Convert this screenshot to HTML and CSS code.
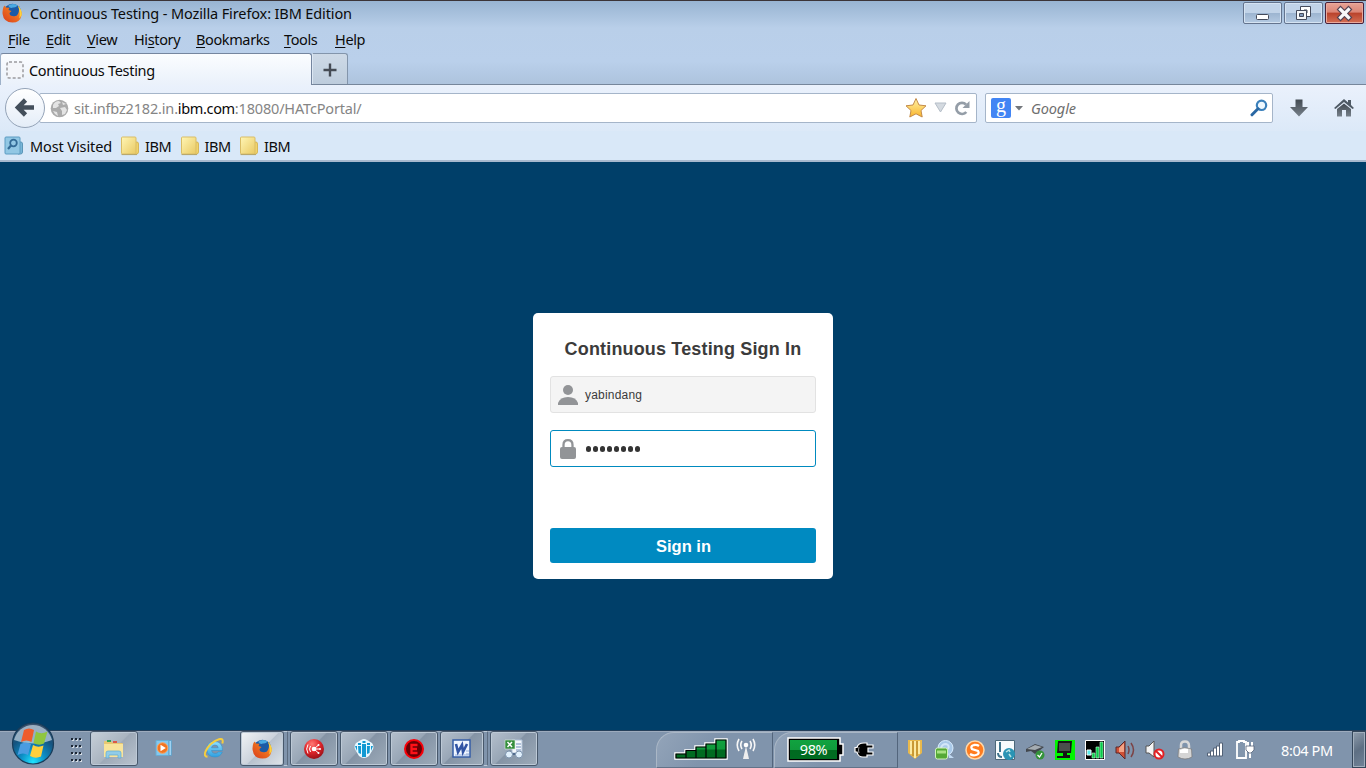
FILE: index.html
```html
<!DOCTYPE html>
<html lang="en">
<head>
<meta charset="utf-8">
<title>Continuous Testing</title>
<link rel="stylesheet" href="styles.css">
</head>
<body>
<svg class="defs" width="0" height="0">
  <defs>
    <linearGradient id="fold" x1="0" y1="0" x2="1" y2="1"><stop offset="0" stop-color="#fff6b5"/><stop offset="1" stop-color="#e9c963"/></linearGradient>
    <linearGradient id="steel" x1="0" y1="0" x2="0" y2="1"><stop offset="0" stop-color="#424a52"/><stop offset="1" stop-color="#77818b"/></linearGradient>
    <linearGradient id="green" x1="0" y1="0" x2="0" y2="1"><stop offset="0" stop-color="#11a340"/><stop offset=".5" stop-color="#109a3c"/><stop offset=".55" stop-color="#006a20"/><stop offset="1" stop-color="#006c22"/></linearGradient>
    <linearGradient id="flame" x1="0" y1="1" x2="1" y2="0"><stop offset="0" stop-color="#d93c1c"/><stop offset=".6" stop-color="#ef7420"/><stop offset="1" stop-color="#ffd33b"/></linearGradient>
    <linearGradient id="star" x1="0" y1="0" x2="0" y2="1"><stop offset="0" stop-color="#fff3a5"/><stop offset="1" stop-color="#f9b52d"/></linearGradient>
    <linearGradient id="sky" x1="0" y1="0" x2="0" y2="1"><stop offset="0" stop-color="#8fe0ff"/><stop offset="1" stop-color="#2f9fe0"/></linearGradient>
    <radialGradient id="orb" cx=".5" cy=".95" r=".9"><stop offset="0" stop-color="#20e4ff"/><stop offset=".35" stop-color="#0c8cc4"/><stop offset=".7" stop-color="#155480"/><stop offset="1" stop-color="#36516d"/></radialGradient>
    <radialGradient id="redball" cx=".4" cy=".25" r=".8"><stop offset="0" stop-color="#ff7a75"/><stop offset=".5" stop-color="#e1262c"/><stop offset="1" stop-color="#920d14"/></radialGradient>
    <symbol id="fox" viewBox="0 0 20 20">
      <circle cx="10.500" cy="9.500" r="8.800" fill="#1b5aa6"/>
      <path d="M6 2.800Q10.500-.500 15.500 2.500Q14 5 11 4.500Q8.500 6 6 2.800Z" fill="#49a9e2"/>
      <path d="M1.500 4L2.500 2.500L4 4.500L7.500 4.800L6.500 7L9.500 8L7.500 10Q7.500 13 10.500 13Q14.500 14 16 11Q18 7 16 2.800Q20.500 8 19.500 12.500Q18 19.600 10.500 19.600Q1.500 19.200.6 11Q.2 7 1.500 4Z" fill="url(#flame)"/>
      <path d="M16 2.800Q20.300 7 19.500 12.500L17 15.500Q19 9 16 2.800Z" fill="#ffd23a"/>
    </symbol>
    <symbol id="folder" viewBox="0 0 19 20">
      <path d="M15 6h2q1.500 0 1.500 2v8q0 2-2 2H14z" fill="#f1d36a" stroke="#d1ad45" stroke-width=".8"/>
      <rect x="1.500" y="1" width="14.500" height="17" rx="1" fill="url(#fold)" stroke="#d9bd66"/>
      <path d="M1.500 18.600H17" stroke="#b4a468" stroke-width="1"/>
    </symbol>
  </defs>
</svg>

<header class="chrome">
  <div class="titlebar">
    <svg class="fox" width="20" height="20"><use href="#fox"/></svg>
    <span class="win-title">Continuous Testing - Mozilla Firefox: IBM Edition</span>
    <div class="controls">
      <span class="ctl"><svg width="37" height="20"><rect x="12.500" y="11.500" width="12" height="5" rx="1" fill="#fff" stroke="#454b5b"/></svg></span>
      <span class="ctl"><svg width="37" height="20"><path d="M15.500 3.500h10v10h-10z" fill="#fff" stroke="#454b5b"/><path d="M19 7h3v3h-3z" fill="#93a9c7" stroke="#454b5b"/><path d="M11.500 7.500h10v9h-10z" fill="#f4f6f8" stroke="#454b5b"/><path d="M14.500 10.500h4v3h-4z" fill="#8099bb" stroke="#454b5b"/></svg></span>
      <span class="ctl close"><svg width="37" height="20"><path d="M14.500 6.500L22.500 14.500M22.500 6.500L14.500 14.500" stroke="#534252" stroke-width="5.500" stroke-linecap="square"/><path d="M14.500 6.500L22.500 14.500M22.500 6.500L14.500 14.500" stroke="#f8f8f8" stroke-width="3.200" stroke-linecap="square"/></svg></span>
    </div>
  </div>
  <nav class="menubar">
    <span><u>F</u>ile</span><span><u>E</u>dit</span><span><u>V</u>iew</span><span>Hi<u>s</u>tory</span><span><u>B</u>ookmarks</span><span><u>T</u>ools</span><span><u>H</u>elp</span>
  </nav>
  <div class="tabs">
    <div class="tab">
      <svg width="18" height="18"><rect x="1" y="1" width="16" height="16" rx="2" fill="#f4f6fa" stroke="#9a9a9e" stroke-width="1.500" stroke-dasharray="3 2"/></svg>
      <span class="tab-title">Continuous Testing</span>
    </div>
    <div class="newtab"><svg width="14" height="14"><path d="M7 .500v13M.500 7h13" stroke="#454b54" stroke-width="2.400"/></svg></div>
  </div>
  <div class="navbar">
    <div class="back"><svg width="22" height="22"><path d="M11.500 3L4 10.500L11.500 18M4.500 10.500H20" fill="none" stroke="#444f5b" stroke-width="4.600"/></svg></div>
    <div class="url">
      <svg class="globe" width="19" height="19"><circle cx="9.500" cy="9.500" r="8.800" fill="#ababab"/><path d="M3 6Q5 2 9 2L11 4L8 5L9 7L6 9L3 9ZM10 9L15 8L17 11L15 15L12 16L12 12ZM12 3L16 5L13 6ZM3 12L7 13L8 17L5 15Z" fill="#e4e4e4"/></svg>
      <span class="address">sit.infbz2182.in.<b>ibm.com</b>:18080/HATcPortal/</span>
      <svg class="star" width="22" height="22"><path d="M11 1.500L14 8L21 8.800L16 13.500L17.200 20L11 16.800L4.800 20L6 13.500L1 8.800L8 8Z" fill="url(#star)" stroke="#c48b49" stroke-linejoin="round"/></svg>
      <svg class="drop" width="14" height="12"><path d="M1 1h11L6.500 10Z" fill="#d4dae0" stroke="#b5bec8"/></svg>
      <svg class="reload" width="17" height="17"><path d="M12.300 12A5.600 5.600 0 1 1 12 4.500" fill="none" stroke="#949da7" stroke-width="2.700"/><path d="M15.500 1V8H8.500Z" fill="#949da7"/></svg>
    </div>
    <div class="search">
      <span class="g">g</span>
      <svg class="caret" width="8" height="5"><path d="M0 0h8L4 4.500Z" fill="#73777c"/></svg>
      <span class="hint">Google</span>
      <svg width="18" height="18"><circle cx="11.500" cy="6.300" r="4.700" fill="#eef8ff" stroke="#3b80bb" stroke-width="2.200"/><path d="M8 9.800L2 15.800" stroke="#2a68a4" stroke-width="3" stroke-linecap="round"/></svg>
    </div>
    <svg class="down" width="20" height="20"><path d="M6.500 1.500h7v7.500h5.500L10 18.500L1 9H6.500Z" fill="url(#steel)"/></svg>
    <svg class="home" width="20" height="20"><path d="M10 1L14 4.500V2h3v5L20 10l-1.500 1L10 4L1.500 11L0 10Z" fill="#4f5a65"/><path d="M3 11L10 5.500L17 11V18.500H12V12H8V18.500H3Z" fill="url(#steel)"/></svg>
  </div>
  <div class="bookmarks">
    <svg class="mv" width="19" height="20"><path d="M15 6h2q1.500 0 1.500 2v8q0 2-2 2H14z" fill="#79b6d8" stroke="#5c96b8"/><rect x="1" y="1" width="15" height="17" rx="1" fill="#91c7e4" stroke="#5d9cc2"/><circle cx="9.500" cy="7" r="3.300" fill="none" stroke="#336b96" stroke-width="1.800"/><path d="M7 9.500L4 13" stroke="#336b96" stroke-width="2.200"/></svg>
    <span class="most">Most Visited</span>
    <svg class="folder" width="19" height="20"><use href="#folder"/></svg><span class="bm">IBM</span>
    <svg class="folder" width="19" height="20"><use href="#folder"/></svg><span class="bm">IBM</span>
    <svg class="folder" width="19" height="20"><use href="#folder"/></svg><span class="bm">IBM</span>
  </div>
</header>

<main class="page">
  <form class="card">
    <h1>Continuous Testing Sign In</h1>
    <div class="field user">
      <svg width="20" height="20"><circle cx="10" cy="5" r="5" fill="#929497"/><path d="M0 20V18Q2 12 10 12Q18 12 20 18V20Z" fill="#929497"/></svg>
      <span>yabindang</span>
    </div>
    <div class="field pass">
      <svg width="20" height="20"><path d="M5.500 10V6Q5.500 1.200 10 1.200Q14.500 1.200 14.500 6V10" fill="none" stroke="#929497" stroke-width="2.300"/><rect x="2" y="8" width="16" height="12" rx="2" fill="#929497"/></svg>
      <span class="dots"><i></i><i></i><i></i><i></i><i></i><i></i><i></i><i></i></span>
    </div>
    <div class="submit">Sign in</div>
  </form>
</main>

<footer class="taskbar">
  <svg class="orb" width="46" height="44" viewBox="0 0 46 44">
    <circle cx="23" cy="21.500" r="20.500" fill="url(#orb)" stroke="#193c59" stroke-width="1.200"/>
    <path d="M4 18A19.500 19.500 0 0 1 42 18Q24 25 4 18Z" fill="#d5e2ec" opacity=".65"/>
    <path d="M14 8Q19 5 24 8L21.500 20Q16.500 17 11 20Z" fill="#ee5c2c"/><path d="M26 9.500Q31 13 37.500 9.500L34 21.500Q29 24 23.500 21Z" fill="#8fc63e"/><path d="M10.500 22Q16 19 21 22L18 33Q13 30 7.500 33Z" fill="#4a9ce1"/><path d="M23 23Q28 26 33.500 23.500L31 34.500Q25.500 37 20 34Z" fill="#ffcf3c"/>
  </svg>
  <svg class="grip" width="12" height="26"><path d="M2 3h10M2 10h10M2 17h10M2 24h10" stroke="#d3dbe4" stroke-width="2" stroke-dasharray="2 2"/><path d="M1 2h10M1 9h10M1 16h10M1 23h10" stroke="#1d2836" stroke-width="2" stroke-dasharray="2 2"/></svg>
  <div class="tb w48 lit"><svg width="20" height="20"><path d="M0 3Q0 2 1 2H7L9 4H18Q19 4 19 5V18H0Z" fill="#e8c873"/><path d="M3 1h4v2H3z" fill="#31a359"/><path d="M9 2h4v2H9z" fill="#dc5945"/><path d="M0 5H19V18H0Z" fill="#f8e49b"/><path d="M2 19V14Q2 12 4 12H15Q17 12 17 14V19H14V16H5V19Z" fill="#91cce8" stroke="#5ea9d0" stroke-width=".700"/></svg></div>
  <svg class="wmp" width="18" height="18"><path d="M1 1.500H14V16.500H1Z" fill="#84c8ee" stroke="#68acd3"/><path d="M14 1.500h2.500v15H14z" fill="#9fd3f2" stroke="#5a9dc6" stroke-width=".800"/><circle cx="7.500" cy="9" r="5.300" fill="#f27420" stroke="#f9a765"/><path d="M5.500 5.800L10.800 9L5.500 12.200Z" fill="#fff"/></svg>
  <svg class="ie" width="20" height="20"><path d="M10.500 3.500Q18.500 3.500 18.500 12.500H7.500Q8 15.500 11 15.500Q13.500 15.500 14.300 14H18.300Q16.500 19 11 19Q3 19 3 11.300Q3 3.500 10.500 3.500ZM7.500 9.800H14.200Q14 7 11 7Q8 7 7.500 9.800Z" fill="url(#sky)" fill-rule="evenodd" stroke="#2f8fc8" stroke-width=".500"/><path d="M3.500 18.800Q-.500 18.500 1.500 13.500Q6 4 15 1.200Q20 0 18.300 5.500" fill="none" stroke="#f5ce3e" stroke-width="2"/></svg>
  <div class="tb w44 active"><svg width="20" height="20"><use href="#fox"/></svg></div><i class="stack"></i>
  <div class="tb w48 b2"><svg width="22" height="22"><circle cx="11" cy="11" r="10" fill="url(#redball)"/><circle cx="11" cy="11" r="2.300" fill="#fff"/><path d="M11 11L15.500 7M11 11H17M11 11L15.500 15M7.500 8Q5.500 11 7.500 14M5 6.500Q2.300 11 5 15.500" stroke="#fff" fill="none" stroke-width="1"/><circle cx="15.500" cy="7" r="1" fill="#fff"/><circle cx="17" cy="11" r="1" fill="#fff"/><circle cx="15.500" cy="15" r="1" fill="#fff"/></svg></div>
  <div class="tb w48 b2"><svg width="20" height="20"><path d="M7 1Q10-1 13 1L18 4Q21 8 18 12L15 17Q10 21 5 17L2 12Q-1 8 2 4Z" fill="#e7f8ff"/><path d="M8.500 2h3v2h-3zM8 5h4V18H8zM4 4h3v2H4zM13 4h3v2h-3zM4 7H7V15L4.500 14zM13 7h3L15.500 14L13 15zM1 7h2v5zM17 7H19l-2 5z" fill="#1199d2"/></svg></div>
  <div class="tb w48 b2"><svg width="20" height="20"><circle cx="10" cy="10" r="9" fill="#690005" stroke="#f70009" stroke-width="2"/><path d="M13.500 6H7.500v8h6M7.500 10h5.500" stroke="#ff1118" stroke-width="2.300" fill="none"/></svg></div>
  <div class="tb w44 b2"><svg width="20" height="20"><path d="M1 1H18V18H1Z" fill="#eff5ff" stroke="#365da6" stroke-width="1.500"/><path d="M14 15h3M14 12h3M3 16h14" stroke="#93add9"/><path d="M4 5L6 13L10 6L11 13L15 5" fill="none" stroke="#3154a4" stroke-width="2.600"/></svg></div><i class="stack"></i>
  <div class="tb w48 b2"><svg width="20" height="20"><path d="M8 1H18V14H8Z" fill="#f4f7fb" stroke="#afc1d8"/><path d="M12 5h5M12 8h5M12 11h5" stroke="#718fbb"/><path d="M1 1H11V10H1Z" fill="#358e3c" stroke="#dcefdc" stroke-width=".600"/><path d="M3.500 3L8 8M8 3L3.500 8" stroke="#fff" stroke-width="1.500"/><path d="M8 15h4" stroke="#526c8e" stroke-width="2"/><circle cx="5" cy="15.500" r="3.500" fill="#e0effc" stroke="#7c92ac"/><circle cx="15" cy="15.500" r="3.500" fill="#e0effc" stroke="#7c92ac"/></svg></div>

  <div class="panel signal">
    <svg width="54" height="22"><path d="M1 21V15H11V12H21V8H31V5H41V1H53V21Z" fill="url(#green)" stroke="#fff" stroke-width="1.500"/><path d="M2 20V16H12V12.500H22V9H32V6H42V2H52V20ZM12 16V20M22 12V20M32 9V20M42 6V20" fill="none" stroke="#000" stroke-width="1.200"/></svg>
    <svg width="20" height="22"><path d="M10 8L7 21H13Z" fill="#eee"/><circle cx="10" cy="7" r="2.300" fill="#fff"/><path d="M6 3Q3.500 7 6 11M3 1Q-.500 7 3 13M14 3Q16.500 7 14 11M17 1Q20.500 7 17 13" fill="none" stroke="#f7f7f7" stroke-width="1.600"/></svg>
  </div>
  <div class="panel battery">
    <div class="batt"><svg width="57" height="26"><path d="M1 1H53V7H56V18H53V24H1Z" fill="#000" stroke="#fff" stroke-width="1.500"/><path d="M3 3H50V22H3Z" fill="url(#green)"/></svg><span>98%</span></div>
    <svg width="20" height="16"><path d="M1 5.500H3Q4 1 10 1H13V3H19V6H14V10H19V13H13V15H9Q4 15 3 10H1Z" fill="#000" stroke="#fff" stroke-width="1.200"/><path d="M5 5Q4 8 5 11" stroke="#999" fill="none"/></svg>
  </div>
  <div class="tray">
    <svg width="20" height="22"><path d="M3 1H17V14L10 20L3 14Z" fill="#e9b94c"/><path d="M6 2V15M10 2V19M14 2V15" stroke="#fff1b0" stroke-width="1.700"/><path d="M8 2V17M12 2V17" stroke="#a8781e"/></svg>
    <svg width="20" height="20"><circle cx="10.500" cy="8" r="7.500" fill="#a9c9e9" stroke="#d9edff"/><path d="M13 13L19 18H14Z" fill="#c1daf3"/><path d="M6 8Q7 4 11 4Q15 5 13 9" fill="none" stroke="#d3e6f8" stroke-width="2"/><rect x=".500" y="8" width="12" height="11" rx="2" fill="#55a936" stroke="#d2f2bd"/><path d="M2 12h9" stroke="#a9e184" stroke-width="3"/></svg>
    <svg width="20" height="20"><circle cx="10" cy="10" r="9" fill="#ff7c1f" stroke="#ffd7a7" stroke-width="1.500"/><path d="M14 6Q12 4.500 9 5Q5 6 7 9L13 11Q15 14 11 15Q8 16 5 14" fill="none" stroke="#fff" stroke-width="2.300"/></svg>
    <svg width="20" height="20"><path d="M.500.500H19.500V19.500H.500Z" fill="#f7fbfc" stroke="#4c6879"/><path d="M5 2V12M3 13Q3 17 7 17" stroke="#3f758d" stroke-width="2" fill="none"/><circle cx="14" cy="14" r="6" fill="#2994b4"/><path d="M11 12L14 10L15 12M14 14L16 17" stroke="#b8e4e4" stroke-width="1.500" fill="none"/></svg>
    <svg width="20" height="20"><path d="M1 9L10 4L19 7L10 14L6 11L1 12Z" fill="#42474d"/><path d="M2 9L10 5L17 7L10 10Z" fill="#a4abb1"/><circle cx="15" cy="15" r="4.500" fill="#33943a"/><path d="M12.500 15L14.500 17L17 13" stroke="#fff" fill="none" stroke-width="1.300"/></svg>
    <svg width="20" height="20"><path d="M0 0H20V20H0Z" fill="#00f600"/><path d="M3 1H17L16 13H2Z" fill="#161616"/><path d="M4 3H15V11H4Z" fill="#4a4f4b"/><path d="M8 13H12V15H15V18H2V16H8Z" fill="#141414"/></svg>
    <svg width="20" height="20"><path d="M.500.500H19.500V19.500H.500Z" fill="#000" stroke="#fff"/><path d="M2 10H6V15H2Z" fill="#58eeee" stroke="#fff"/><path d="M7 18V13H10V18ZM11 18V7H14V18ZM15 18V2H18V18Z" fill="#08c948" stroke="#c8ffda" stroke-width=".600"/></svg>
    <svg width="20" height="20"><path d="M1 7H4L10 1V19L4 13H1Z" fill="#cf5036" stroke="#59282b"/><path d="M4 8L9 3V12H4" fill="#f4a385"/><path d="M13 6Q15 10 13 14M16 3Q21 10 16 17" fill="none" stroke="#7c4345" stroke-width="1.500"/></svg>
    <svg width="20" height="20"><path d="M1 6H4L9 1V17L4 13H1Z" fill="#f4f4f4" stroke="#555"/><circle cx="14" cy="14" r="4.500" fill="#fff" stroke="#e12024" stroke-width="2"/><path d="M11 11L17 17" stroke="#e12024" stroke-width="2"/></svg>
    <svg width="20" height="20"><path d="M6 10V5Q6 1.500 10 1.500Q14 1.500 14 6V10" fill="none" stroke="#d9d9d9" stroke-width="2.500"/><path d="M3.500 9Q9 6 16.500 9L17 17Q10 21 3 17Z" fill="#d5d5d5" stroke="#777" stroke-width=".700"/><path d="M5 10Q9 8 13 9V13H5Z" fill="#fff"/></svg>
    <svg width="20" height="20"><path d="M2.500 13H5.500V16H2.500ZM5.500 11H8.500V16H5.500ZM8.500 8H11.500V16H8.500ZM11.500 6H14.500V16H11.500ZM14.500 3H17.500V16H14.500Z" fill="#fff" stroke="#526176" stroke-width="1"/></svg>
    <svg width="20" height="20"><path d="M2 2H4V1H9V2H11V18H2Z" fill="#8296ad" stroke="#fff" stroke-width="1.800"/><path d="M13 2V7M17 2V7M15 12V18" stroke="#fff" stroke-width="2"/><path d="M11 6H19V10L16 13H14L11 10Z" fill="#fff" stroke="#536176" stroke-width=".800"/></svg>
  </div>
  <span class="clock">8:04 PM</span>
  <div class="desktop"></div>
</footer>
</body>
</html>
```
FILE: styles.css
```css
* { box-sizing: border-box; }
body { margin: 0; width: 1366px; height: 768px; overflow: hidden; display: flex; flex-direction: column; background: #003f69; font-family: "Noto Sans", "Open Sans", sans-serif; font-size: 14.5px; color: #0b0b0b; }
svg { display: block; flex: none; }
.defs { position: absolute; }
.chrome { height: 162px; flex: none; background: linear-gradient(#98b4d2 0, #b9cfe9 27px, #bad0eb 60px, #adc3dd 84px); border-top: 1px solid #3b3438; display: flex; flex-direction: column; }
.titlebar { height: 26px; display: flex; padding-left: 2px; }
.fox { margin-top: 2px; }
.win-title { margin-left: 8px; line-height: 25px; white-space: nowrap; letter-spacing: -.12px; }
.controls { margin-left: auto; margin-right: 2px; display: flex; gap: 2px; padding-top: 1px; height: 23px; }
.ctl { width: 39px; height: 22px; border: 1px solid #64748e; border-radius: 2px; background: linear-gradient(#c1d3e8 0 48%, #9cb4d0 50%, #b4cae2); box-shadow: inset 0 0 0 1px #d5e3f2; }
.close { border-color: #492039; background: linear-gradient(#e7a396, #dc8575 46%, #b9422b 50%, #d46f54); box-shadow: inset 0 0 0 1px #eaa99b; }
.menubar { height: 26px; display: grid; grid-template-columns: 38px 41px 47px 62px 88px 51px 60px; padding-left: 8px; line-height: 24px; letter-spacing: -.38px; }
.menubar u { text-underline-offset: 2px; text-decoration-thickness: 1px; }
.tabs { height: 32px; display: flex; border-bottom: 1px solid #76869b; }
.tab { width: 312px; height: 32px; display: flex; align-items: center; padding: 1px 0 0 5px; border: 1px solid #75869f; border-left-color: #9eb1c9; border-bottom: 0; border-radius: 3px 3px 0 0; background: linear-gradient(#fbfdff, #eaf1fb); }
.tab-title { margin-left: 5px; letter-spacing: -.3px; line-height: 20px; }
.newtab { width: 36px; height: 31px; padding-top: 1px; border: 1px solid #8395ab; border-left-color: #dce7f3; border-bottom: 0; border-radius: 0 3px 0 0; background: linear-gradient(#cedae7, #bdccdc); display: flex; align-items: center; justify-content: center; }
.navbar { height: 46px; background: linear-gradient(#eaf1fc, #dce9f8); display: flex; align-items: center; padding-left: 5px; }
.back { width: 40px; height: 40px; border: 1px solid #94a3b7; border-radius: 50%; background: linear-gradient(#fff, #e4edf8); display: flex; align-items: center; justify-content: center; z-index: 1; }
.url { width: 938px; height: 30px; margin-left: -6px; border: 1px solid #a5b5c9; border-radius: 2px; background: #fff; display: flex; align-items: center; padding-left: 10px; }
.address { margin-left: 5px; color: #858585; white-space: nowrap; letter-spacing: -.17px; }
.address b { font-weight: 400; color: #080808; letter-spacing: -.35px; }
.star { margin-left: auto; }
.drop { margin-left: 7px; }
.reload { margin: 0 5px 0 6px; }
.search { width: 288px; height: 30px; margin-left: 8px; border: 1px solid #a5b5c9; border-radius: 2px; background: #fff; display: flex; align-items: center; padding: 0 4px 0 5px; }
.g { width: 20px; height: 20px; border-radius: 2px; background: #4285f4; color: #fff; text-align: center; font: 20px/15px "Liberation Serif", serif; }
.caret { margin-left: 4px; }
.hint { margin: 0 auto 0 8px; font-style: italic; color: #6e6e6e; letter-spacing: -.1px; }
.down { margin-left: 16px; }
.home { margin-left: 25px; }
.bookmarks { height: 31px; background: #d9e8f8; border-bottom: 2px solid #a7b9ce; display: flex; align-items: center; padding-left: 4px; }
.bookmarks span { padding-top: 1px; }
.most { width: 90px; margin-left: 7px; letter-spacing: -.1px; white-space: nowrap; }
.bm { width: 34.500px; margin-left: 6px; letter-spacing: -.4px; }
.page { flex: 1; display: flex; justify-content: center; align-items: flex-start; padding-top: 151px; background: #003f69; }
.card { width: 300px; height: 266px; padding: 24px 17px 16px; border-radius: 5px; background: #fff; font-family: "Liberation Sans", Arial, sans-serif; color: #3b3b3b; }
h1 { height: 24px; margin: 0 0 15px; font-size: 18px; line-height: 24px; text-align: center; white-space: nowrap; letter-spacing: .16px; }
.field { height: 37px; border: 1px solid #e2e2e2; border-radius: 3px; padding-left: 7px; display: flex; align-items: center; gap: 7px; background: #f4f4f4; font-size: 12px; letter-spacing: .2px; }
.pass { margin-top: 17px; border-color: #008abf; background: #fff; }
.dots { display: flex; gap: 1.500px; padding: 1px 0 0 .500px; }
.dots i { width: 5.500px; height: 5.500px; border-radius: 50%; background: #343434; }
.submit { margin-top: 61px; height: 35px; border-radius: 3px; background: #008ac1; color: #fff; text-align: center; font-size: 16.500px; font-weight: 700; line-height: 37px; padding-left: 1px; }
.taskbar { position: relative; height: 38px; flex: none; display: flex; align-items: center; border-top: 1px solid #253f5a; box-shadow: inset 0 1px #9dabbd; background: #8094ac; color: #fff; }
.orb { position: absolute; left: 10px; top: -9px; }
.grip { margin-left: 70px; }
.tb { height: 35px; align-self: flex-start; border: 1px solid #48586b; box-shadow: inset 0 0 0 1px #bdc9d6; border-radius: 3px; background: linear-gradient(135deg, #b4bfcc 0, #98a6b6 45%, #8493a5 47%, #9dabb9); display: flex; align-items: center; justify-content: center; flex: none; }
.w48 { width: 48px; }
.w44 { width: 44px; }
.lit { margin-left: 8px; background: linear-gradient(135deg, #c7cfd8, #a9b4c0 50%, #9da9b7 52%, #bac4cf); }
.wmp { margin: 0 0 4px 17px; }
.ie { margin: 0 0 4px 31px; }
.active { margin-left: 16px; background: linear-gradient(135deg, #f2f4f6, #ccd3dc 50%, #b7c1cd 52%, #dfe4e9); }
.stack { width: 4px; height: 35px; align-self: flex-start; border: solid #bdc9d6; border-width: 1px 1px 1px 0; border-right-color: #5c6c80; flex: none; }
.b2 { margin-left: 2px; }
.panel { height: 36px; align-self: flex-start; margin-top: 1px; border: 1px solid #aab7c6; border-right-color: #53657c; border-bottom-color: #627389; border-radius: 18px 0 0 0; display: flex; align-items: center; flex: none; background: linear-gradient(125deg, #93a4b9, #8094ac 45%); }
.signal { width: 117px; margin-left: 118px; padding: 0 0 2px 17px; gap: 8px; }
.battery { width: 124px; margin-left: 1px; padding-left: 12px; gap: 10px; }
.batt { display: grid; height: 26px; }
.batt > * { grid-area: 1 / 1; }
.batt span { z-index: 1; width: 53px; text-align: center; line-height: 25px; letter-spacing: -.4px; }
.tray { display: flex; margin-left: 7px; gap: 10px; align-items: center; flex: none; }
.clock { margin-left: 26px; width: 71px; white-space: nowrap; letter-spacing: -.4px; padding-top: 1px; flex: none; }
.desktop { width: 14px; height: 37px; border: 1px solid #35475b; box-shadow: inset 0 0 0 1px #a2afbd; background: linear-gradient(145deg, #8f9dad, #5e6f83 50%, #718398); flex: none; }
```
